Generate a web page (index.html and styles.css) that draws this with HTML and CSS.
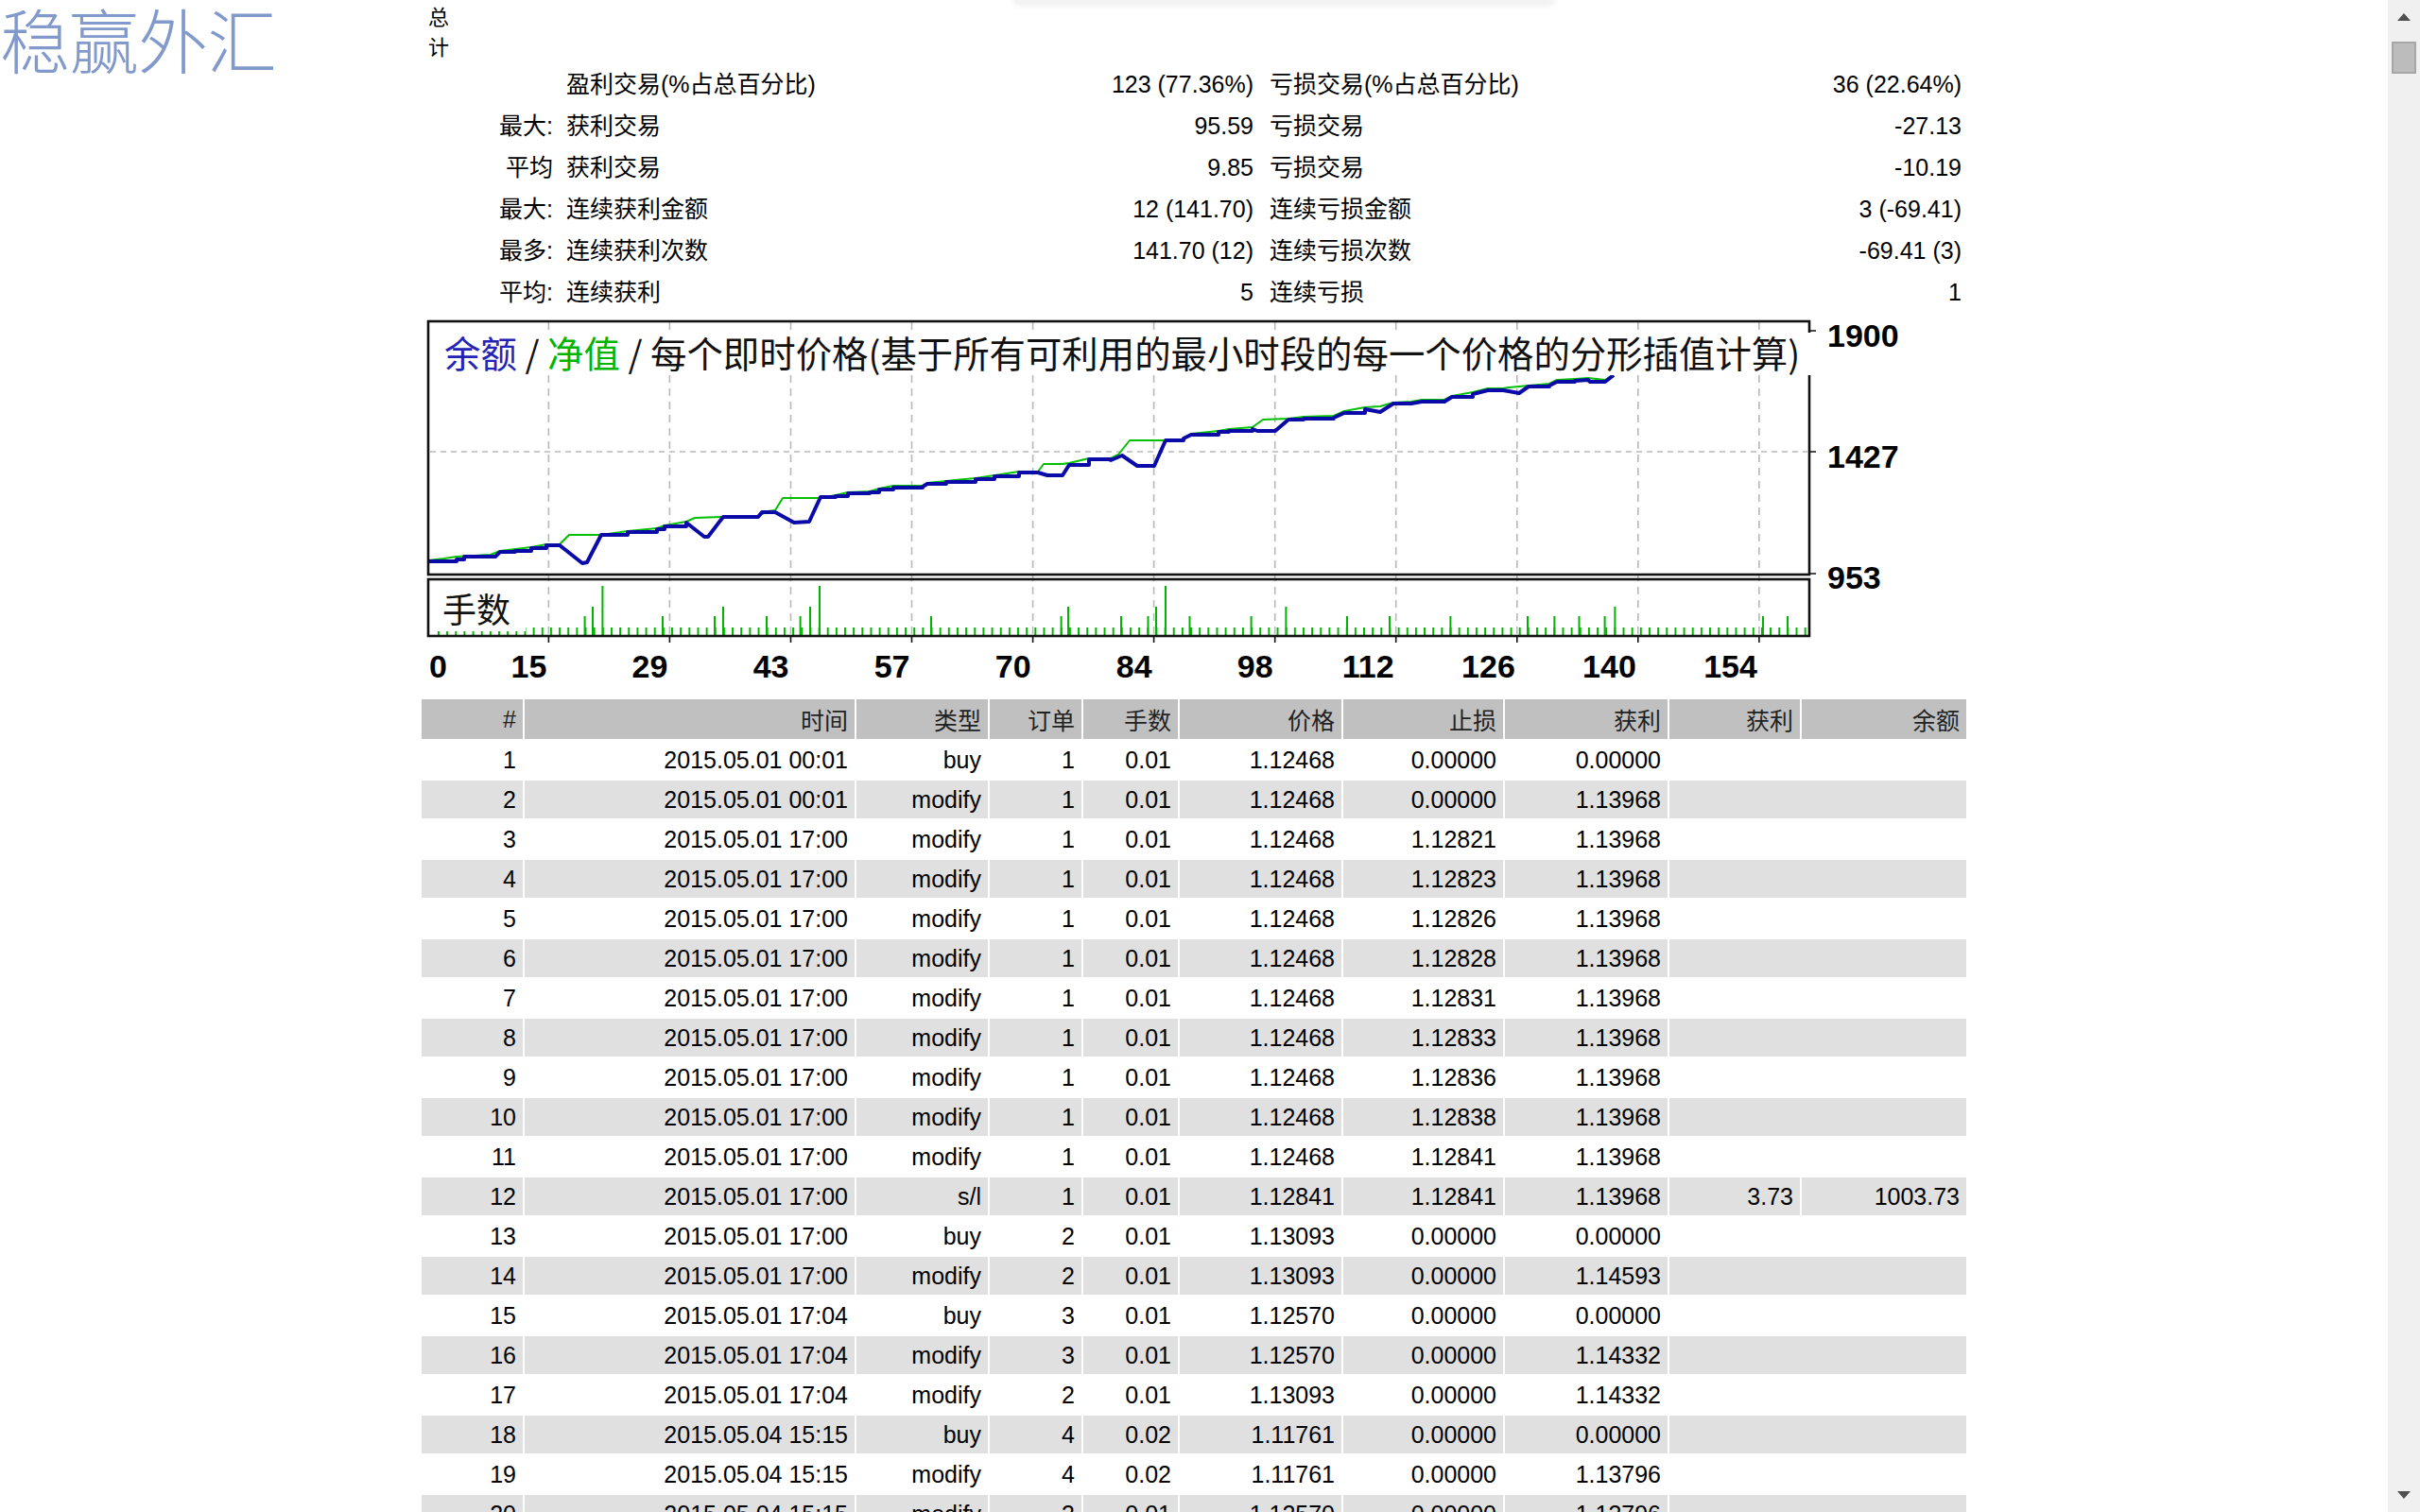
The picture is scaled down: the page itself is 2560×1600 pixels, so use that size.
FILE: index.html
```html
<!DOCTYPE html>
<html lang="zh-CN">
<head>
<meta charset="utf-8">
<title>稳赢外汇 - 策略测试报告</title>
<link rel="stylesheet" href="styles.css">
</head>
<body>
<div class="page">
  <div class="logo">稳赢外汇</div>
  <div class="topshade"></div>
  <div class="wrap">
    <div class="total">总计</div>
    <div class="stats">
      <div class="c1"></div><div class="c2">盈利交易(%占总百分比)</div><div class="c3">123 (77.36%)</div><div class="c4">亏损交易(%占总百分比)</div><div class="c5">36 (22.64%)</div>
      <div class="c1">最大:</div><div class="c2">获利交易</div><div class="c3">95.59</div><div class="c4">亏损交易</div><div class="c5">-27.13</div>
      <div class="c1">平均</div><div class="c2">获利交易</div><div class="c3">9.85</div><div class="c4">亏损交易</div><div class="c5">-10.19</div>
      <div class="c1">最大:</div><div class="c2">连续获利金额</div><div class="c3">12 (141.70)</div><div class="c4">连续亏损金额</div><div class="c5">3 (-69.41)</div>
      <div class="c1">最多:</div><div class="c2">连续获利次数</div><div class="c3">141.70 (12)</div><div class="c4">连续亏损次数</div><div class="c5">-69.41 (3)</div>
      <div class="c1">平均:</div><div class="c2">连续获利</div><div class="c3">5</div><div class="c4">连续亏损</div><div class="c5">1</div>
    </div>

    <svg class="chart" viewBox="445 331 1636 400" width="1636" height="400" xmlns="http://www.w3.org/2000/svg">
      <defs>
        <pattern id="vb" x="463" y="0" width="9.15" height="400" patternUnits="userSpaceOnUse">
          <rect x="0" y="0" width="2" height="400" fill="#00b400"/>
        </pattern>
      </defs>
      <path class="grid" d="M580.4 341V672 M708.4 341V672 M836.5 341V672 M964.5 341V672 M1092.6 341V672 M1220.6 341V672 M1348.7 341V672 M1476.7 341V672 M1604.8 341V672 M1732.8 341V672 M1860.9 341V672"/>
      <path class="gridh" d="M455 478H1912"/>
      <rect x="462" y="668" width="94" height="4" fill="url(#vb)"/>
      <rect x="556" y="664" width="1356" height="8" fill="url(#vb)"/>
      <path class="vol" d="M618.6 672V652 M627 672V642 M637.4 672V620 M701 672V652 M756 672V652 M765 672V642 M811 672V652 M846.6 672V652 M857 672V642 M867 672V620 M985 672V652 M1122.6 672V652 M1130 672V642 M1186 672V652 M1214.5 672V652 M1223 672V642 M1233 672V620 M1258.5 672V652 M1323.6 672V652 M1360.4 672V642 M1425 672V652 M1470 672V652 M1534.4 672V652 M1616 672V652 M1644.4 672V652 M1670.5 672V652 M1697.6 672V652 M1708.4 672V642 M1865 672V652 M1891 672V652"/>
      <polyline class="eq" points="453,593 470,591 483,589 519,587 529,583 562,579 578,576 592,576 602,566 636,566 664,562 695,559 703,556 726,552 735,548 765,547 802,546 812,541 820,540 828,527 868,527 884,524 897,521 920,520 930,517 945,514 976,514 981,511 1001,509 1032,506 1052,503 1078,499 1098,499 1104,491 1124,491 1131,490 1152,485 1175,485 1183,481 1195,466 1233,466 1252,465 1260,459 1289,456 1300,454 1325,452 1336,444 1363,443 1379,441 1411,440 1422,435 1444,431 1460,430 1474,426 1493,425 1504,423 1528,423 1536,419 1558,415 1574,411 1590,411 1596,410 1607,409 1617,408 1639,406 1647,402 1666,401 1680,400 1698,402 1707,396"/>
      <polyline class="bal" points="453,594 483,594 483,592 491,592 491,589 519,589 524,589 529,584 545,584 545,583 562,583 562,580 578,580 578,577 592,577 616,596 621,595 636,566 664,566 664,563 695,563 695,560 703,560 703,557 726,557 726,553 745,568 749,568 765,547 802,547 806,542 820,542 840,553 856,552 868,526 884,526 884,525 897,525 897,522 920,522 920,521 930,521 930,518 945,518 945,516 976,516 976,515 981,512 1001,512 1001,510 1032,510 1032,507 1052,507 1052,504 1078,504 1078,500 1098,500 1108,503 1124,503 1131,492 1152,492 1152,486 1175,486 1175,487 1187,482 1203,493 1221,493 1233,466 1252,466 1252,464 1260,460 1289,460 1289,457 1300,457 1300,456 1325,456 1325,454 1330,456 1349,456 1363,444 1379,444 1379,443 1411,443 1411,442 1422,437 1444,437 1444,433 1460,436 1474,427 1493,427 1493,427 1504,425 1528,425 1536,420 1558,420 1558,417 1574,413 1590,413 1596,414 1607,416 1617,409 1639,409 1639,408 1647,404 1666,404 1666,403 1680,402 1682,404 1698,404 1707,397"/>
      <rect class="frame" x="453" y="340" width="1461" height="268"/>
      <rect class="frame" x="453" y="613" width="1461" height="60"/>
      <rect x="462" y="352" width="1456" height="45" fill="#fff"/>
      <path class="tick" d="M580.4 674V680 M708.4 674V680 M836.5 674V680 M964.5 674V680 M1092.6 674V680 M1220.6 674V680 M1348.7 674V680 M1476.7 674V680 M1604.8 674V680 M1732.8 674V680 M1860.9 674V680 M1915 350H1921 M1915 478H1921 M1915 607H1921"/>
      <text class="ttl" x="470" y="389"><tspan fill="#2323b8">余额</tspan> / <tspan fill="#00b400">净值</tspan> / 每个即时价格(基于所有可利用的最小时段的每一个价格的分形插值计算)</text>
      <text class="ttl2" x="468" y="659">手数</text>
      <text class="ax" x="1933" y="367">1900</text>
      <text class="ax" x="1933" y="495">1427</text>
      <text class="ax" x="1933" y="623">953</text>
      <text class="ax" x="454" y="717">0</text>
      <text class="ax end" x="578.4" y="717">15</text>
      <text class="ax end" x="706.4" y="717">29</text>
      <text class="ax end" x="834.5" y="717">43</text>
      <text class="ax end" x="962.5" y="717">57</text>
      <text class="ax end" x="1090.6" y="717">70</text>
      <text class="ax end" x="1218.6" y="717">84</text>
      <text class="ax end" x="1346.7" y="717">98</text>
      <text class="ax end" x="1474.7" y="717">112</text>
      <text class="ax end" x="1602.8" y="717">126</text>
      <text class="ax end" x="1730.8" y="717">140</text>
      <text class="ax end" x="1858.9" y="717">154</text>
    </svg>

    <table class="trades">
      <thead>
        <tr>
          <th class="w1">#</th><th class="w2">时间</th><th class="w3">类型</th><th class="w4">订单</th><th class="w5">手数</th><th class="w6">价格</th><th class="w7">止损</th><th class="w8">获利</th><th class="w9">获利</th><th class="w10">余额</th>
        </tr>
      </thead>
      <tbody>
        <tr><td>1</td><td>2015.05.01 00:01</td><td>buy</td><td>1</td><td>0.01</td><td>1.12468</td><td>0.00000</td><td>0.00000</td><td colspan="2"></td></tr>
        <tr class="alt"><td>2</td><td>2015.05.01 00:01</td><td>modify</td><td>1</td><td>0.01</td><td>1.12468</td><td>0.00000</td><td>1.13968</td><td colspan="2"></td></tr>
        <tr><td>3</td><td>2015.05.01 17:00</td><td>modify</td><td>1</td><td>0.01</td><td>1.12468</td><td>1.12821</td><td>1.13968</td><td colspan="2"></td></tr>
        <tr class="alt"><td>4</td><td>2015.05.01 17:00</td><td>modify</td><td>1</td><td>0.01</td><td>1.12468</td><td>1.12823</td><td>1.13968</td><td colspan="2"></td></tr>
        <tr><td>5</td><td>2015.05.01 17:00</td><td>modify</td><td>1</td><td>0.01</td><td>1.12468</td><td>1.12826</td><td>1.13968</td><td colspan="2"></td></tr>
        <tr class="alt"><td>6</td><td>2015.05.01 17:00</td><td>modify</td><td>1</td><td>0.01</td><td>1.12468</td><td>1.12828</td><td>1.13968</td><td colspan="2"></td></tr>
        <tr><td>7</td><td>2015.05.01 17:00</td><td>modify</td><td>1</td><td>0.01</td><td>1.12468</td><td>1.12831</td><td>1.13968</td><td colspan="2"></td></tr>
        <tr class="alt"><td>8</td><td>2015.05.01 17:00</td><td>modify</td><td>1</td><td>0.01</td><td>1.12468</td><td>1.12833</td><td>1.13968</td><td colspan="2"></td></tr>
        <tr><td>9</td><td>2015.05.01 17:00</td><td>modify</td><td>1</td><td>0.01</td><td>1.12468</td><td>1.12836</td><td>1.13968</td><td colspan="2"></td></tr>
        <tr class="alt"><td>10</td><td>2015.05.01 17:00</td><td>modify</td><td>1</td><td>0.01</td><td>1.12468</td><td>1.12838</td><td>1.13968</td><td colspan="2"></td></tr>
        <tr><td>11</td><td>2015.05.01 17:00</td><td>modify</td><td>1</td><td>0.01</td><td>1.12468</td><td>1.12841</td><td>1.13968</td><td colspan="2"></td></tr>
        <tr class="alt"><td>12</td><td>2015.05.01 17:00</td><td>s/l</td><td>1</td><td>0.01</td><td>1.12841</td><td>1.12841</td><td>1.13968</td><td>3.73</td><td>1003.73</td></tr>
        <tr><td>13</td><td>2015.05.01 17:00</td><td>buy</td><td>2</td><td>0.01</td><td>1.13093</td><td>0.00000</td><td>0.00000</td><td colspan="2"></td></tr>
        <tr class="alt"><td>14</td><td>2015.05.01 17:00</td><td>modify</td><td>2</td><td>0.01</td><td>1.13093</td><td>0.00000</td><td>1.14593</td><td colspan="2"></td></tr>
        <tr><td>15</td><td>2015.05.01 17:04</td><td>buy</td><td>3</td><td>0.01</td><td>1.12570</td><td>0.00000</td><td>0.00000</td><td colspan="2"></td></tr>
        <tr class="alt"><td>16</td><td>2015.05.01 17:04</td><td>modify</td><td>3</td><td>0.01</td><td>1.12570</td><td>0.00000</td><td>1.14332</td><td colspan="2"></td></tr>
        <tr><td>17</td><td>2015.05.01 17:04</td><td>modify</td><td>2</td><td>0.01</td><td>1.13093</td><td>0.00000</td><td>1.14332</td><td colspan="2"></td></tr>
        <tr class="alt"><td>18</td><td>2015.05.04 15:15</td><td>buy</td><td>4</td><td>0.02</td><td>1.11761</td><td>0.00000</td><td>0.00000</td><td colspan="2"></td></tr>
        <tr><td>19</td><td>2015.05.04 15:15</td><td>modify</td><td>4</td><td>0.02</td><td>1.11761</td><td>0.00000</td><td>1.13796</td><td colspan="2"></td></tr>
        <tr class="alt"><td>20</td><td>2015.05.04 15:15</td><td>modify</td><td>3</td><td>0.01</td><td>1.12570</td><td>0.00000</td><td>1.13796</td><td colspan="2"></td></tr>
      </tbody>
    </table>
  </div>
  <div class="scrollbar">
    <div class="sb-up"></div>
    <div class="sb-thumb"></div>
    <div class="sb-down"></div>
  </div>
</div>
</body>
</html>
```

FILE: styles.css
```css
html {
  overflow: hidden;
}
body {
  margin: 0;
  background: #ffffff;
  color: #000000;
  font-family: "Liberation Sans", "Noto Sans CJK SC", sans-serif;
}
.page {
  width: 2526px;
}
.logo {
  position: absolute;
  left: 0;
  top: 3px;
  font-family: "Noto Sans CJK SC", sans-serif;
  font-weight: 300;
  font-size: 74px;
  line-height: 1;
  color: #8199cb;
  letter-spacing: -1px;
}
.topshade {
  position: absolute;
  left: 1074px;
  top: -12px;
  width: 569px;
  height: 16px;
  background: #f3f3f3;
  box-shadow: 0 0 8px rgba(0, 0, 0, 0.10);
}
.wrap {
  width: 1636px;
  margin: 0 auto;
}
.total {
  width: 24px;
  height: 64px;
  padding-left: 8px;
  font-family: "Noto Sans CJK SC", sans-serif;
  font-size: 22px;
  line-height: 32px;
}
.stats {
  display: grid;
  grid-template-columns: 146px 370px 371px 370px 379px;
  margin-top: 3px;
  font-size: 25px;
}
.stats > div {
  height: 44px;
  line-height: 44px;
  white-space: nowrap;
}
.c1 {
  text-align: right;
  padding-right: 6px;
}
.c2 {
  padding-left: 8px;
}
.c3 {
  text-align: right;
  padding-right: 6px;
}
.c4 {
  padding-left: 11px;
}
.c5 {
  text-align: right;
  padding-right: 6px;
}
.chart {
  display: block;
}
.grid {
  fill: none;
  stroke: #b8b8b8;
  stroke-width: 1.6;
  stroke-dasharray: 8 6;
}
.gridh {
  fill: none;
  stroke: #b8b8b8;
  stroke-width: 1.6;
  stroke-dasharray: 6 5;
}
.vol {
  fill: none;
  stroke: #00b400;
  stroke-width: 2;
}
.eq {
  fill: none;
  stroke: #00c000;
  stroke-width: 2;
  stroke-linejoin: round;
}
.bal {
  fill: none;
  stroke: #0a0aa8;
  stroke-width: 4;
  stroke-linejoin: round;
}
.frame {
  fill: none;
  stroke: #111111;
  stroke-width: 2.6;
}
.tick {
  fill: none;
  stroke: #111111;
  stroke-width: 1.6;
}
.ttl {
  font-family: "Noto Sans CJK SC", sans-serif;
  font-size: 38.4px;
  fill: #111111;
}
.ttl2 {
  font-family: "Noto Sans CJK SC", sans-serif;
  font-size: 36px;
  fill: #111111;
}
.ax {
  font-family: "Liberation Sans", sans-serif;
  font-size: 34px;
  font-weight: bold;
  fill: #000000;
}
.end {
  text-anchor: end;
}
.trades {
  margin: 7px 0 0 -1px;
  width: 1638px;
  border-spacing: 2px;
  table-layout: fixed;
  font-size: 25px;
}
.trades th,
.trades td {
  box-sizing: border-box;
  padding: 0 7px 0 0;
  text-align: right;
  white-space: nowrap;
}
.trades th {
  height: 42px;
  background: #c0c0c0;
  font-weight: normal;
  color: #222222;
}
.trades td {
  height: 40px;
}
.trades tr.alt td {
  background: #e0e0e0;
}
.w1 { width: 107px; }
.w2 { width: 349px; }
.w3 { width: 139px; }
.w4 { width: 97px; }
.w5 { width: 100px; }
.w6 { width: 171px; }
.w7 { width: 169px; }
.w8 { width: 172px; }
.w9 { width: 138px; }
.w10 { width: 174px; }
.scrollbar {
  position: fixed;
  right: 0;
  top: 0;
  width: 34px;
  height: 100vh;
  background: #f0f0f0;
}
.sb-up {
  position: absolute;
  left: 10px;
  top: 14px;
  width: 0;
  height: 0;
  border-left: 7px solid transparent;
  border-right: 7px solid transparent;
  border-bottom: 8px solid #505050;
}
.sb-thumb {
  position: absolute;
  left: 4px;
  top: 44px;
  width: 26px;
  height: 34px;
  box-sizing: border-box;
  border: 2px solid #a6a6a6;
  background: #bcbcbc;
}
.sb-down {
  position: absolute;
  left: 10px;
  bottom: 14px;
  width: 0;
  height: 0;
  border-left: 7px solid transparent;
  border-right: 7px solid transparent;
  border-top: 8px solid #505050;
}
```
